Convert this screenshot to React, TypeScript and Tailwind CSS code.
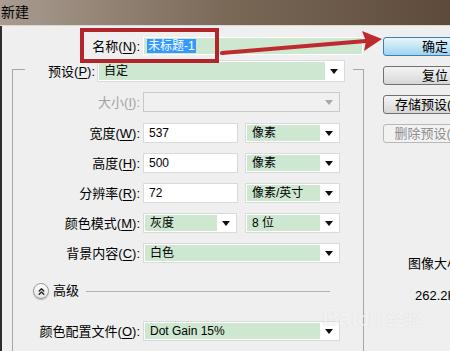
import React from 'react';
import { ChevronsUp } from 'lucide-react';

const FONT = { fontFamily: '"Liberation Sans", "Noto Sans CJK SC", sans-serif' };

// small black (or grey) triangle used in the dropdowns
function Caret({ disabled }: { disabled?: boolean }) {
    return (
        <svg width="8" height="5" viewBox="0 0 8 5">
            <polygon points="0,0 8,0 4,5" fill={disabled ? '#a8a8a8' : '#111'} />
        </svg>
    );
}

function Label({ text, keyChar, width, disabled }: { text: string; keyChar: string; width: string; disabled?: boolean }) {
    return (
        <div className={`${width} shrink-0 text-right text-[13px] leading-none ${disabled ? 'text-[#a3a3a3]' : 'text-black'}`}>
            {text}(<span className="underline underline-offset-2">{keyChar}</span>):
        </div>
    );
}

function Select({ value, width, disabled }: { value?: string; width: string; disabled?: boolean }) {
    return (
        <div className={`${width} h-[20px] flex border ${disabled ? 'border-[#c9c9c9] bg-[#f0f0f0]' : 'border-[#dadada] bg-white'} p-[1px]`}>
            <div className={`flex-1 flex items-center pl-[5px] text-[12px] text-black ${disabled ? '' : 'bg-[#cde7d1]'}`}>{value}</div>
            <div className="w-[18px] flex items-center justify-center">
                <Caret disabled={disabled} />
            </div>
        </div>
    );
}

function Input({ value, width }: { value: string; width: string }) {
    return (
        <div className={`${width} h-[20px] flex items-center border border-[#dadada] bg-white pl-[5px] text-[12px] text-black`}>{value}</div>
    );
}

function Button({ text, primary, disabled }: { text: string; primary?: boolean; disabled?: boolean }) {
    let cls = 'border-[#707070] bg-gradient-to-b from-[#f3f3f3] via-[#e6e6e6] to-[#d6d6d6] text-black';
    if (primary) cls = 'border-[#3c7fb1] bg-gradient-to-b from-[#e8f5fc] via-[#c4e5f6] to-[#9fd3f1] text-black';
    if (disabled) cls = 'border-[#b8b8b8] bg-[#f2f2f2] text-[#8e8e8e]';
    return (
        <div className={`w-[104px] h-[19px] shrink-0 rounded-[3px] border flex items-center justify-center text-[13px] ${cls}`}>
            {text}
        </div>
    );
}

export default function App() {
    return (
        <div className="relative w-[450px] h-[351px] overflow-hidden bg-[#efefef]" style={FONT}>
            {/* title bar */}
            <div className="h-[26px] flex items-center pl-[1px] text-[14px] text-black bg-gradient-to-r from-[#a99c90] via-[#7b6958] to-[#5d4a3b] border-b border-[#d8d8d8]">
                新建
            </div>

            <div className="flex h-[325px] border-l-2 border-[#2f2c2a]">
                {/* left column */}
                <div className="w-[368px] shrink-0 flex flex-col">
                    <div className="mt-[11px] flex items-center h-[18px]">
                        <Label text="名称" keyChar="N" width="w-[138px]" />
                        <div className="ml-[3px] w-[220px] h-[18px] flex items-center bg-[#cde7d1] border border-white pl-[3px]">
                            <span className="bg-[#3399ff] text-white text-[12px] leading-[14px] px-[1px]">未标题-1</span>
                        </div>
                    </div>

                    {/* group box */}
                    <div className="mt-[14px] ml-[10px] w-[352px] flex-1 border-l border-t border-r border-[#a6a6a6] flex flex-col">
                        <div className="-mt-[10px] ml-[12px] w-[328px] h-[22px] flex items-center bg-[#efefef]">
                            <Label text="预设" keyChar="P" width="w-[70px]" />
                            <div className="ml-[2px]">
                                <Select value="自定" width="w-[248px] h-[22px]" />
                            </div>
                        </div>

                        <div className="mt-[10px] flex items-center">
                            <Label text="大小" keyChar="I" width="w-[127px]" disabled />
                            <div className="ml-[3px]"><Select width="w-[197px]" disabled /></div>
                        </div>

                        <div className="mt-[11px] flex items-center">
                            <Label text="宽度" keyChar="W" width="w-[127px]" />
                            <div className="ml-[3px]"><Input value="537" width="w-[95px]" /></div>
                            <div className="ml-[7px]"><Select value="像素" width="w-[95px]" /></div>
                        </div>

                        <div className="mt-[10px] flex items-center">
                            <Label text="高度" keyChar="H" width="w-[127px]" />
                            <div className="ml-[3px]"><Input value="500" width="w-[95px]" /></div>
                            <div className="ml-[7px]"><Select value="像素" width="w-[95px]" /></div>
                        </div>

                        <div className="mt-[10px] flex items-center">
                            <Label text="分辨率" keyChar="R" width="w-[127px]" />
                            <div className="ml-[3px]"><Input value="72" width="w-[95px]" /></div>
                            <div className="ml-[7px]"><Select value="像素/英寸" width="w-[95px]" /></div>
                        </div>

                        <div className="mt-[10px] flex items-center">
                            <Label text="颜色模式" keyChar="M" width="w-[127px]" />
                            <div className="ml-[3px]"><Select value="灰度" width="w-[94px]" /></div>
                            <div className="ml-[8px]"><Select value="8 位" width="w-[95px]" /></div>
                        </div>

                        <div className="mt-[10px] flex items-center">
                            <Label text="背景内容" keyChar="C" width="w-[127px]" />
                            <div className="ml-[3px]"><Select value="白色" width="w-[197px]" /></div>
                        </div>

                        <div className="mt-[18px] h-[20px] flex items-center pl-[20px] pr-[33px]">
                            <div className="w-[16px] h-[16px] rounded-full border border-[#9a9a9a] bg-gradient-to-b from-white to-[#e4e4e4] shadow-[0_1px_1px_rgba(0,0,0,0.25)] flex items-center justify-center">
                                <ChevronsUp size={11} strokeWidth={3} color="#222" />
                            </div>
                            <span className="ml-[4px] text-[13px] text-black">高级</span>
                            <div className="ml-[7px] flex-1 h-px bg-[#b4b4b4]" />
                        </div>

                        <div className="mt-[20px] flex items-center">
                            <Label text="颜色配置文件" keyChar="O" width="w-[127px]" />
                            <div className="ml-[3px]"><Select value="Dot Gain 15%" width="w-[197px]" /></div>
                        </div>
                    </div>
                </div>

                {/* right column */}
                <div className="w-[120px] shrink-0 pl-[13px] flex flex-col">
                    <div className="mt-[11px]"><Button text="确定" primary /></div>
                    <div className="mt-[10px]"><Button text="复位" /></div>
                    <div className="mt-[10px]"><Button text="存储预设(S)..." /></div>
                    <div className="mt-[10px]"><Button text="删除预设(D)..." disabled /></div>
                    <div className="mt-[111px] ml-[25px] text-[13px] text-black whitespace-nowrap">图像大小:</div>
                    <div className="mt-[12px] ml-[32px] text-[13px] text-black whitespace-nowrap">262.2K</div>
                </div>
            </div>

            {/* faint watermark */}
            <div className="absolute left-[322px] top-[300px] text-[24px] font-bold text-white/70 tracking-tight pointer-events-none" style={{ textShadow: '0 0 1px rgba(0,0,0,0.12)' }}>
                Bai<span className="text-[20px]">du</span> <span className="text-[18px]">经验</span>
            </div>

            {/* red annotation box and arrow */}
            <div className="absolute left-[80px] top-[28px] w-[139px] h-[35px] border-[4px] border-[#b1262b]" />
            <svg className="absolute inset-0 pointer-events-none" width="450" height="351">
                <line x1="222" y1="53" x2="366" y2="41" stroke="#be2b2e" strokeWidth="4" strokeLinecap="round" />
                <polygon points="382,39 362,31 366,41 364,51" fill="#be2b2e" />
            </svg>
        </div>
    );
}
